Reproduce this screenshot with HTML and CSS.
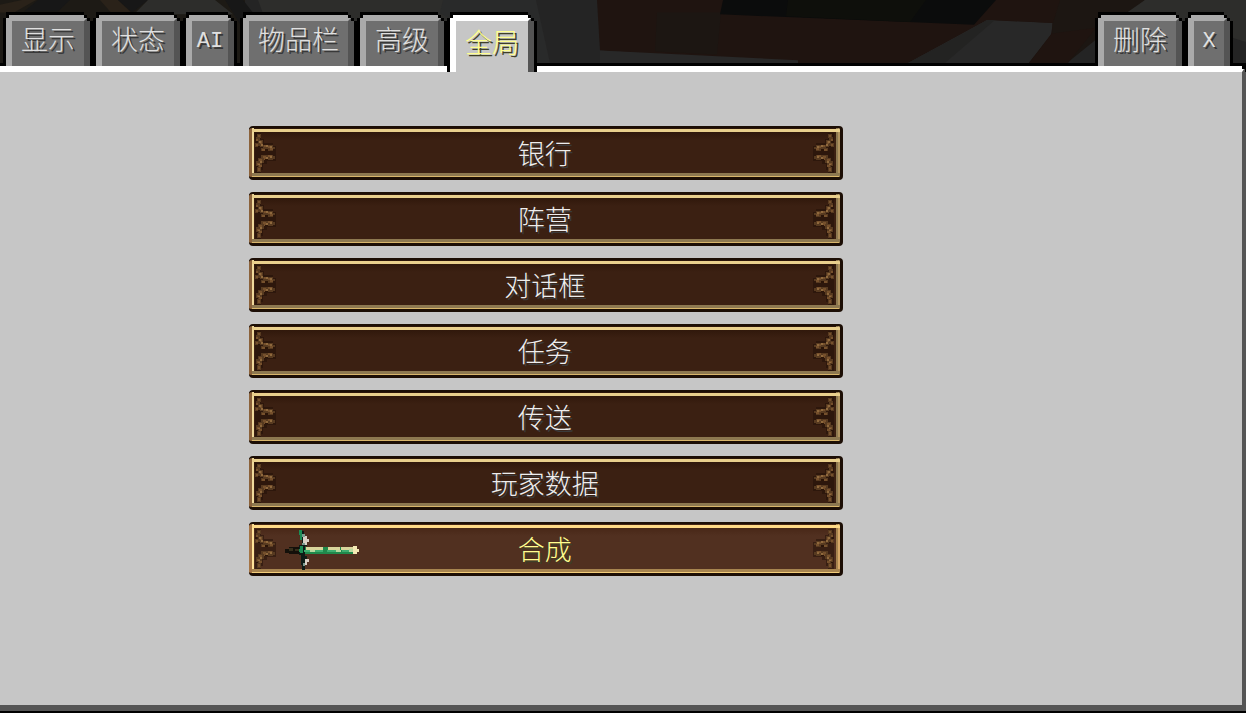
FILE: index.html
```html
<!DOCTYPE html>
<html lang="zh-CN">
<head>
    <meta charset="UTF-8">
    <meta name="viewport" content="width=device-width, initial-scale=1.0">
    <title>全局</title>
    <link rel="stylesheet" href="styles.css">
</head>
<body>
    <!-- shared shapes -->
    <svg class="defs" width="0" height="0" aria-hidden="true">
        <symbol id="ornament" viewBox="0 0 22 40">
            <path fill="#1f0e05" opacity=".5" d="M0 0h6v6h3v4h9v3h3v15h-9v3H8v6H6v3H0z"/>
            <path fill="#573a20" d="M2 1h4v4H2zM1 4h4v4H1zM3 7h5v7H3zM0 10h4v4H0zM8 12h10v6H8zM6 15h4v3H6zM18 14h2v2h-2zM6 22h12v5H6zM3 25h6v5H3zM18 23h2v3h-2zM1 28h6v6H1zM2 34h4v5H2z"/>
            <path fill="#76502c" d="M3 2h2v2H3zM1 6h2v2H1zM5 8h2v3H5zM1 11h2v2H1zM9 12h3v2H9zM13 13h3v2h-3zM7 16h3v2H7zM15 15h3v2h-3zM8 23h3v2H8zM13 22h4v2h-4zM4 26h3v2H4zM9 25h3v2H9zM2 30h3v2H2zM4 32h3v2H4zM3 35h2v3H3z"/>
            <path fill="#8f693d" d="M4 8h2v2H4zM6 11h2v2H6zM11 12h2v2h-2zM15 13h2v2h-2zM11 24h2v2h-2zM15 23h2v2h-2zM5 28h2v2H5zM3 31h2v1H3z"/>
            <path fill="#2a1408" d="M10 16h3v2h-3zM0 8h2v2H0zM3 13h2v1H3zM10 26h3v1h-3zM1 33h2v1H1z"/>
        </symbol>
    </svg>

    <div class="screen">
        <header class="topbar">
            <svg class="scene" viewBox="0 0 1246 66" preserveAspectRatio="none" aria-hidden="true">
                <path fill="#242424" d="M0 0h1246v66H0z"/>
                <path fill="#1d1a15" d="M0 0h245v66H0z"/>
                <path fill="#2a2219" d="M0 5l22-5h14L14 13H0zM100 0h18l13 13h-20zM173 0h12l14 12h-18z"/>
                <path fill="#171717" d="M38 0h32L58 12H24zM118 0h30l-16 13zM225 0h18l15 20-15 10z"/>
                <path fill="#2d2d2b" d="M148 0h67l18 15h-99zM258 0h185l18 34H270z"/>
                <path fill="#292a2a" d="M443 0h93l14 66h-18L440 14z"/>
                <path fill="#1f1410" d="M597 0h399l95 28-52 38H798l-198-13z"/>
                <path fill="#1c1612" d="M657 13h64l-4 44-62-3z"/>
                <path fill="#0b0c0c" d="M723 0h273l-22 26-254-11z"/>
                <path fill="#0e0f0b" d="M788 0h138l-16 23-124-6z"/>
                <path fill="#282828" d="M600 53l198 10v3H600zM987 21l66 3-2 12-22 30H908z"/>
                <path fill="#232322" d="M960 37l27-16 8 0-50 45h-37z"/>
                <path fill="#1c1612" d="M1053 0h92l-78 66h-38l23-30z"/>
                <path fill="#1f1410" d="M996 0h64l-7 24-57-3zM1052 35l44-6-28 37h-39z"/>
                <path fill="#2d2d2b" d="M1145 0h101v44l-60-20-60-10z"/>
            </svg>
            <nav class="tabs">
                <button class="tab" type="button"><span>显示</span></button>
                <button class="tab" type="button"><span>状态</span></button>
                <button class="tab tab-latin tab-ai" type="button"><span>AI</span></button>
                <button class="tab spaced" type="button"><span>物品栏</span></button>
                <button class="tab" type="button"><span>高级</span></button>
                <button class="tab active" type="button" aria-current="page"><span>全局</span></button>
            </nav>
            <div class="tabs actions">
                <button class="tab" type="button"><span>删除</span></button>
                <button class="tab tab-latin tab-close" type="button"><span>X</span></button>
            </div>
        </header>

        <main class="panel">
            <div class="menu">
                <button class="menu-btn" type="button">
                    <svg class="ornament"><use href="#ornament"/></svg>
                    <span>银行</span>
                    <svg class="ornament flip"><use href="#ornament"/></svg>
                </button>
                <button class="menu-btn" type="button">
                    <svg class="ornament"><use href="#ornament"/></svg>
                    <span>阵营</span>
                    <svg class="ornament flip"><use href="#ornament"/></svg>
                </button>
                <button class="menu-btn" type="button">
                    <svg class="ornament"><use href="#ornament"/></svg>
                    <span>对话框</span>
                    <svg class="ornament flip"><use href="#ornament"/></svg>
                </button>
                <button class="menu-btn" type="button">
                    <svg class="ornament"><use href="#ornament"/></svg>
                    <span>任务</span>
                    <svg class="ornament flip"><use href="#ornament"/></svg>
                </button>
                <button class="menu-btn" type="button">
                    <svg class="ornament"><use href="#ornament"/></svg>
                    <span>传送</span>
                    <svg class="ornament flip"><use href="#ornament"/></svg>
                </button>
                <button class="menu-btn" type="button">
                    <svg class="ornament"><use href="#ornament"/></svg>
                    <span>玩家数据</span>
                    <svg class="ornament flip"><use href="#ornament"/></svg>
                </button>
                <button class="menu-btn hovered" type="button">
                    <svg class="ornament"><use href="#ornament"/></svg>
                    <span>合成</span>
                    <svg class="ornament flip"><use href="#ornament"/></svg>
                    <!-- sword cursor -->
                    <svg class="sword" viewBox="0 0 76 42" aria-hidden="true">
                        <path fill="#14100a" d="M1 20h4v-2h14v7H5v-1H1z"/>
                        <path fill="#37301c" d="M5 19h4v3H5zM11 20h5v2h-5z"/>
                        <path fill="#0d1c17" d="M16 2h4v5h3v10h-2v10h2v6h-2v8h-3v-5h-1V26h-2V16h3v-5h-2z"/>
                        <path fill="#1c8d55" d="M15 1h3v4h2v3h-2v3h-2zM16 17h3v7h-3zM15 20h2v3h-2z"/>
                        <path fill="#d9cfc4" d="M19 7h4v3h2v3h-2v3h-4zM21 30h4v3h-2v3h-2z"/>
                        <path fill="#7d9b8f" d="M18 5h3v3h-3zM18 14h3v2h-3zM19 34h2v3h-2z"/>
                        <path fill="#208a4c" d="M21 18h50v7H21z"/>
                        <path fill="#d9d59c" d="M22 18h17v3H22zM44 18h12v3H44zM57 18h13v3H57z"/>
                        <path fill="#3fae70" d="M20 21h7v2h-7zM31 21h8v2h-8zM43 21h9v2h-9zM58 21h7v2h-7z"/>
                        <path fill="#b9d9a0" d="M26 21h5v2h-5zM52 21h5v2h-5zM65 20h6v3h-6z"/>
                        <path fill="#f4e9b4" d="M69 17h4v3h2v3h-2v2h-4z"/>
                    </svg>
                </button>
            </div>
        </main>
    </div>
</body>
</html>
```

FILE: styles.css
```css
* {
    box-sizing: border-box;
}

body {
    margin: 0;
    font-family: "Noto Sans CJK SC", sans-serif;
    font-weight: 300;
    background-color: #000;
}

button {
    margin: 0;
    padding: 0;
    border: 0;
    font-family: inherit;
    font-weight: inherit;
    cursor: pointer;
}

.defs {
    position: absolute;
}

.screen {
    display: flex;
    flex-direction: column;
    min-height: 100vh;
}

/* top bar */

.topbar {
    position: relative;
    z-index: 1;
    display: flex;
    justify-content: space-between;
    padding: 12px 13px 0 3px;
    border-bottom: 3px solid #000;
}

.scene {
    position: absolute;
    top: 0;
    left: 0;
    width: 100%;
    height: 100%;
    z-index: -1;
}

.tabs {
    display: flex;
    align-items: flex-start;
    margin-bottom: -9px;
}

.tab {
    height: 54px;
    padding: 3px 3px 0;
    background-color: #000;
    color: #e0e0e0;
    font-size: 27px;
    line-height: 36px;
    text-shadow: 2px 2px #383838;
    clip-path: polygon(0 6px, 3px 6px, 3px 0, calc(100% - 9px) 0, calc(100% - 9px) 3px, calc(100% - 6px) 3px, calc(100% - 6px) 6px, calc(100% - 3px) 6px, calc(100% - 3px) 9px, 100% 9px, 100% 100%, 0 100%);
}

.tab span {
    display: block;
    height: 100%;
    padding: 0 9px;
    border: solid #aaa;
    border-width: 6px 6px 0;
    border-right-color: #545454;
    background-color: #6f6f6f;
    clip-path: polygon(0 3px, 3px 3px, 3px 0, calc(100% - 6px) 0, calc(100% - 6px) 3px, calc(100% - 3px) 3px, calc(100% - 3px) 6px, 100% 6px, 100% 100%, 0 100%);
}

.tab.spaced {
    margin-left: 3px;
}

.tab.active {
    height: 60px;
    color: #ffff90;
    line-height: 42px;
    text-shadow: 2px 2px #3f3f28;
}

.tab.active span {
    border-color: #fff;
    border-right-color: #545454;
    background-color: #c6c6c6;
}

.tab-latin {
    font-family: "Liberation Mono", monospace;
    font-size: 22px;
    line-height: 42px;
}

.tab-latin span {
    padding: 0;
}

.tab-ai {
    width: 54px;
}

.tab-close {
    width: 48px;
}

/* panel */

.panel {
    flex: 1;
    padding: 54px 32% 54px 20%;
    border: solid #555;
    border-width: 6px 4px 6px 0;
    border-top-color: #fff;
    margin-bottom: 2px;
    background-color: #c6c6c6;
    clip-path: polygon(0 0, calc(100% - 4px) 0, calc(100% - 4px) 3px, calc(100% - 1px) 3px, calc(100% - 1px) 6px, 100% 6px, 100% 100%, 0 100%);
}

.menu {
    display: flex;
    flex-direction: column;
    gap: 12px;
}

.menu-btn {
    position: relative;
    display: flex;
    align-items: center;
    justify-content: space-between;
    height: 54px;
    padding: 0 6px;
    border: solid #1c0e05;
    border-width: 2px 3px 3px 0;
    border-radius: 4px;
    background-color: #3b2012;
    background-image:
        linear-gradient(#e9cf8c, #e9cf8c),
        linear-gradient(#8d7850 0 3px, #d9b66b 3px),
        linear-gradient(90deg, #8b623b 0 3px, #efd99b 3px),
        linear-gradient(90deg, #8d7850 0 2px, #b0935f 2px),
        linear-gradient(#2b1408, transparent 12px);
    background-repeat: no-repeat;
    background-position: 3px 1px, 3px 100%, 0 0, 100% 0, 0 0;
    background-size: 100% 3px, 100% 4px, 5px 100%, 4px 100%, 100% 100%;
    color: #eee;
    font-size: 27px;
    line-height: 36px;
    text-shadow: 2px 2px #3b3b3b;
}

.menu-btn.hovered {
    background-color: #513020;
    background-image:
        linear-gradient(#ffda87, #ffda87),
        linear-gradient(#a7844f 0 3px, #f4ce7a 3px),
        linear-gradient(90deg, #a57445 0 3px, #ffe49a 3px),
        linear-gradient(90deg, #a7844f 0 2px, #d6a868 2px),
        linear-gradient(#442313, transparent 12px);
    color: #ffff90;
    text-shadow: 2px 2px #3f3f28;
}

.ornament {
    width: 22px;
    height: 40px;
    shape-rendering: crispEdges;
}

.ornament.flip {
    transform: scaleX(-1);
}

.sword {
    position: absolute;
    top: 5px;
    left: 35px;
    width: 76px;
    height: 42px;
    shape-rendering: crispEdges;
}
```
